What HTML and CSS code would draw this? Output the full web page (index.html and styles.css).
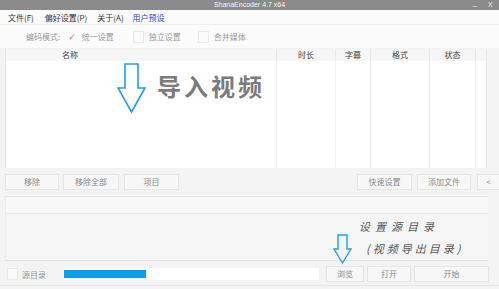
FILE: index.html
```html
<!DOCTYPE html>
<html lang="zh-CN">
<head>
    <meta charset="UTF-8">
    <title>ShanaEncoder 4.7 x64</title>
    <link rel="stylesheet" href="styles.css">
</head>
<body>
    <div class="window">
        <div class="titlebar">
            <span class="title">ShanaEncoder 4.7 x64</span>
            <span class="winbtn min">_</span>
            <span class="winbtn close">X</span>
        </div>

        <div class="menubar">
            <span class="menu m1">文件(F)</span>
            <span class="menu m2">偏好设置(P)</span>
            <span class="menu m3">关于(A)</span>
            <span class="menu m4 active">用户预设</span>
        </div>

        <div class="toolbar">
            <span class="mode-label">编码模式:</span>
            <span class="opt opt1"><span class="tick">✓</span>统一设置</span>
            <span class="opt opt2"><span class="box"></span>独立设置</span>
            <span class="opt opt3"><span class="box"></span>合并媒体</span>
        </div>

        <div class="list">
            <div class="list-head">
                <div class="col c-name">名称</div>
                <div class="col c-time">时长</div>
                <div class="col c-sub">字幕</div>
                <div class="col c-fmt">格式</div>
                <div class="col c-state">状态</div>
                <div class="col c-end"></div>
            </div>
            <div class="list-body">
                <div class="col c-name"></div>
                <div class="col c-time"></div>
                <div class="col c-sub"></div>
                <div class="col c-fmt"></div>
                <div class="col c-state"></div>
                <div class="col c-end"></div>
            </div>
        </div>

        <div class="actions">
            <button class="btn b-remove">移除</button>
            <button class="btn b-removeall">移除全部</button>
            <button class="btn b-project">项目</button>
            <div class="spacer"></div>
            <button class="btn b-quick">快速设置</button>
            <button class="btn b-add">添加文件</button>
            <button class="btn b-arrow">&lt;</button>
        </div>

        <div class="panel">
            <div class="panel-top"></div>
        </div>

        <div class="bottom">
            <span class="box src-box"></span>
            <span class="src-label">源目录</span>
            <div class="progress"><div class="progress-fill" style="width: 82px"></div></div>
            <button class="btn b-browse">浏览</button>
            <button class="btn b-open">打开</button>
            <button class="btn b-start">开始</button>
        </div>

        <!-- annotations drawn over the window -->
        <svg class="arrow big-arrow" width="30" height="51" viewBox="0 0 30 51">
            <polygon points="8,1 21,1 21,25 28,25 14.5,49 1,25 8,25" fill="none" stroke="#1ea0e6" stroke-width="1.6" stroke-linejoin="miter"/>
        </svg>
        <div class="note-import">导入视频</div>

        <svg class="arrow small-arrow" width="20" height="32" viewBox="0 0 20 32">
            <polygon points="5,2 14,2 14,16 18,16 9.5,30 1,16 5,16" fill="none" stroke="#1ea0e6" stroke-width="1.4"/>
        </svg>
        <div class="note-dir">设置源目录</div>
        <div class="note-out">(视频导出目录)</div>
    </div>
</body>
</html>
```

FILE: styles.css
```css
body {
    margin: 0;
    padding: 0;
    background: #f2f2f2;
    font-family: "Noto Sans CJK SC", "Liberation Sans", sans-serif;
    color: #555;
}
.window {
    position: relative;
    width: 499px;
    height: 289px;
    overflow: hidden;
    background: #f3f3f3;
}
.titlebar {
    position: relative;
    height: 10px;
    background: #8b8b8b;
    color: #f4f4f4;
    font-family: "Liberation Sans", sans-serif;
    font-size: 7px;
    line-height: 10px;
    text-align: center;
}
.winbtn {
    position: absolute;
    top: 0;
    font-size: 7px;
    color: #eee;
}
.winbtn.min {
    left: 473px;
    top: -2px;
}
.winbtn.close {
    left: 488px;
}
.menubar {
    display: flex;
    height: 14px;
    align-items: center;
    background: #fbfbfb;
    font-size: 8px;
    color: #333;
    border-bottom: 1px solid #eeeeee;
}
.menu.m1 { margin-left: 8px; }
.menu.m2 { margin-left: 11px; }
.menu.m3 { margin-left: 10px; }
.menu.m4 { margin-left: 9px; }
.menu.active {
    color: #2d3fe0;
}
.toolbar {
    display: flex;
    align-items: center;
    height: 23px;
    padding-top: 0;
    background: #fbfbfb;
    font-size: 8px;
    color: #9a9a9a;
}
.mode-label {
    margin-left: 26px;
}
.opt {
    display: flex;
    align-items: center;
}
.opt1 { margin-left: 8px; }
.opt2 { margin-left: 19px; }
.opt3 { margin-left: 17px; }
.tick {
    color: #e3638a;
    font-family: "DejaVu Sans", sans-serif;
    font-size: 9px;
    margin-right: 6px;
}
.box {
    display: inline-block;
    width: 9px;
    height: 10px;
    border: 1px solid #e8e8e8;
    background: #fafafa;
    margin-right: 5px;
}
.list {
    margin: 1px 12px 0 5px;
    border-left: 1px solid #e6e6e6;
}
.list-head, .list-body {
    display: grid;
    grid-template-columns: 271px 59px 35px 59px 46px 11px;
}
.list-head {
    height: 12px;
    background: #f6f6f6;
    font-size: 8px;
    line-height: 12px;
    color: #444;
    text-align: center;
}
.list-head .col {
    border-right: 1px solid #e9e9e9;
}
.list-head .c-name {
    text-align: left;
    padding-left: 56px;
}
.list-body {
    height: 107px;
    background: #ffffff;
}
.list-body .col {
    border-right: 1px solid #f3f3f3;
}
.list-body .c-end {
    border-right: 1px solid #e8e8e8;
}
.actions {
    display: flex;
    align-items: center;
    margin-top: 6px;
    height: 16px;
    padding-left: 5px;
}
.btn {
    height: 16px;
    padding: 0;
    border: 1px solid #e6e6e6;
    background: #f7f7f7;
    color: #8a8a8a;
    font-family: "Noto Sans CJK SC", "Liberation Sans", sans-serif;
    font-size: 8px;
    line-height: 14px;
}
.b-remove { width: 54px; }
.b-removeall { width: 56px; margin-left: 4px; }
.b-project { width: 55px; margin-left: 5px; }
.spacer { flex: 1; }
.b-quick { width: 55px; }
.b-add { width: 54px; margin-left: 5px; }
.b-arrow { width: 22px; margin-left: 6px; border-right: none; }
.panel {
    margin: 6px 11px 0 5px;
    height: 63px;
    border-top: 1px solid #e4e4e4;
    border-bottom: 1px solid #e4e4e4;
    border-left: 1px solid #ececec;
    background: #f5f5f5;
}
.panel-top {
    height: 16px;
    border-bottom: 1px solid #ececec;
    background: #f8f8f8;
}
.bottom {
    display: flex;
    align-items: center;
    height: 22px;
    padding-top: 2px;
    font-size: 8px;
    color: #999;
    border-bottom: 1px solid #e8e8e8;
}
.src-box {
    margin-left: 7px;
    margin-right: 4px;
}
.progress {
    width: 255px;
    height: 8px;
    margin-left: 18px;
    border-top: 2px solid #fff;
    border-bottom: 2px solid #fff;
    background: #ffffff;
}
.progress-fill {
    height: 8px;
    background: #0aa0e6;
}
.b-browse { width: 38px; margin-left: 7px; }
.b-open { width: 44px; margin-left: 3px; }
.b-start { width: 75px; margin-left: 3px; }

/* annotations */
.arrow {
    position: absolute;
}
.big-arrow {
    left: 117px;
    top: 63px;
}
.small-arrow {
    left: 333px;
    top: 233px;
}
.note-import {
    position: absolute;
    left: 157px;
    top: 68px;
    font-size: 24px;
    font-weight: bold;
    letter-spacing: 3px;
    color: #7b7b7b;
}
.note-dir, .note-out {
    position: absolute;
    font-size: 11px;
    font-style: italic;
    color: #555;
}
.note-dir {
    left: 359px;
    top: 218px;
    letter-spacing: 5px;
}
.note-out {
    left: 366px;
    top: 240px;
    letter-spacing: 3px;
}
```
